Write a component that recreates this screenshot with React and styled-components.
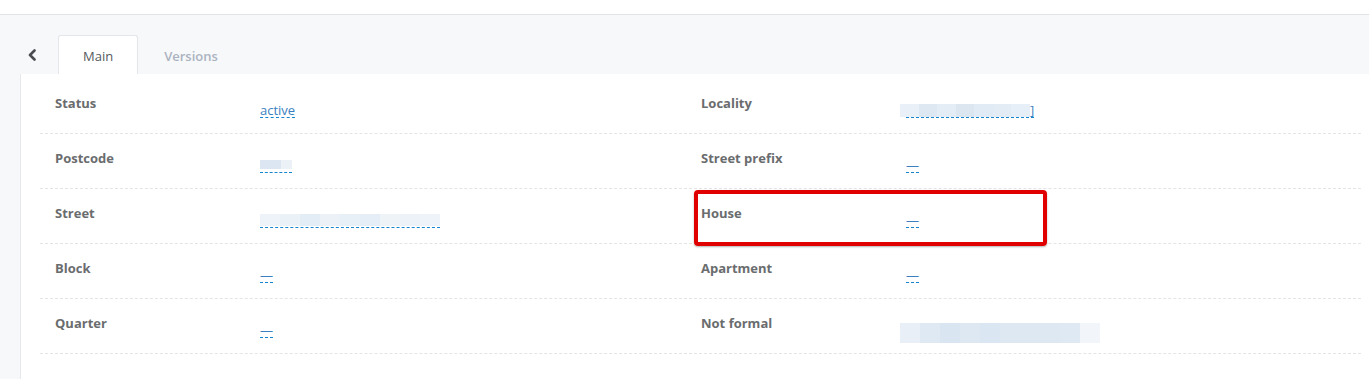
import styled, { createGlobalStyle } from "styled-components";

const GlobalStyle = createGlobalStyle`
    html, body {
        margin: 0;
        padding: 0;
        background: #f7f8fa;
        font-family: "Open Sans", "Liberation Sans", sans-serif;
    }
`;

const Page = styled.div`
    width: 1369px;
    min-height: 379px;
    background: #f7f8fa;
`;

const TopBar = styled.div`
    height: 14px;
    background: #ffffff;
    border-bottom: 1px solid #e2e3e5;
`;

const TabsRow = styled.div`
    display: flex;
    align-items: flex-end;
    padding: 20px 0 0 20px;
    height: 39px;
`;

const BackButton = styled.button`
    width: 23px;
    height: 39px;
    margin-right: 15px;
    padding: 0;
    border: 0;
    background: transparent;
    display: flex;
    align-items: center;
    justify-content: center;
    cursor: pointer;
    svg { margin-top: 1px; }
`;

const Tab = styled.div`
    height: 39px;
    box-sizing: border-box;
    padding: 0 24px;
    margin-right: 1px;
    display: flex;
    align-items: center;
    font-size: 13px;
    font-weight: ${(props) => (props.$active ? 400 : 600)};
    color: ${(props) => (props.$active ? "#555a5e" : "#abb3c0")};
    background: ${(props) => (props.$active ? "#ffffff" : "transparent")};
    border: 1px solid ${(props) => (props.$active ? "#e3e6ea" : "transparent")};
    border-bottom: 0;
    border-radius: 3px 3px 0 0;
    padding-top: 1px;
`;

const Panel = styled.div`
    margin-left: 20px;
    background: #ffffff;
    border-left: 1px solid #e6e8eb;
    padding: 5px 8px 26px 19px;
`;

const Row = styled.div`
    display: flex;
    height: 55px;
    box-sizing: border-box;
    padding: 15px 0 0 15px;
    border-bottom: 1px dashed #e4e4e4;
`;

const Cell = styled.div`
    position: relative;
    display: flex;
    width: 646px;
`;

const Label = styled.div`
    width: 205px;
    font-size: 13px;
    font-weight: 700;
    line-height: 18px;
    color: #6a6c6e;
`;

const ValueBox = styled.div`
    padding-top: 4px;
`;

const Value = styled.span`
    display: inline-block;
    font-size: 13px;
    line-height: 14px;
    color: #3a7fc0;
    border-bottom: ${(props) => (props.$plain ? "0" : "1px dashed #1585d0")};
`;

const Blur = styled.span`
    display: inline-block;
    vertical-align: ${(props) => props.$align || "baseline"};
    width: ${(props) => props.$w}px;
    height: ${(props) => props.$h}px;
    margin-left: ${(props) => props.$shift || 0}px;
    background: ${(props) => {
        const step = 100 / props.$colors.length;
        const stops = props.$colors
            .map((c, i) => `${c} ${i * step}%, ${c} ${(i + 1) * step}%`)
            .join(", ");
        return `linear-gradient(to right, ${stops})`;
    }};
`;

const Highlight = styled.div`
    position: absolute;
    left: -7px;
    top: -14px;
    width: 353px;
    height: 56px;
    box-sizing: border-box;
    border: 4px solid #e00000;
    border-radius: 4px;
    box-shadow: 0 1px 2px rgba(0, 0, 0, 0.3);
    pointer-events: none;
`;

const Dash = () => <Value>—</Value>;

const rows = [
    [
        { label: "Status", value: <Value>active</Value> },
        {
            label: "Locality",
            value: (
                <Value>
                    <Blur $w={130} $h={13} $shift={-6} $align="-2px"
                        $colors={["#e9f0f7", "#dde8f2", "#e4edf6", "#dbe6f1", "#e1ebf5", "#e3ecf5", "#e6eef7"]} />]
                </Value>
            ),
        },
    ],
    [
        {
            label: "Postcode",
            value: (
                <Value>
                    <Blur $w={32} $h={9} $align="1px" $colors={["#dce6f2", "#dce6f2", "#ebf1f7"]} />
                </Value>
            ),
        },
        { label: "Street prefix", value: <Dash /> },
    ],
    [
        {
            label: "Street",
            value: (
                <Value>
                    <Blur $w={180} $h={12} $align="-1px"
                        $colors={["#edf3f8", "#eaf1f7", "#e3edf5", "#ebf1f7", "#e8f0f7", "#e5eef6", "#eef3f8", "#ecf2f8", "#edf3f8"]} />
                </Value>
            ),
        },
        { label: "House", value: <Dash />, marked: true },
    ],
    [
        { label: "Block", value: <Dash /> },
        { label: "Apartment", value: <Dash /> },
    ],
    [
        { label: "Quarter", value: <Dash /> },
        {
            label: "Not formal",
            value: (
                <Value $plain>
                    <Blur $w={200} $h={20} $shift={-6} $align="-8px"
                        $colors={["#e8eff7", "#dfe9f3", "#d9e5f1", "#dde8f2", "#dae6f1", "#dde8f2", "#dde8f2", "#dde8f2", "#dfe9f3", "#f2f6fa"]} />
                </Value>
            ),
        },
    ],
];

const App = () => {
    return (
        <Page>
            <GlobalStyle />
            <TopBar />
            <TabsRow>
                <BackButton aria-label="back">
                    <svg width="10" height="12" viewBox="0 0 10 12">
                        <polyline points="7.5,1.5 3,6 7.5,10.5" fill="none" stroke="#4a4d50" strokeWidth="2.6" strokeLinecap="round" strokeLinejoin="round" />
                    </svg>
                </BackButton>
                <Tab $active>Main</Tab>
                <Tab>Versions</Tab>
            </TabsRow>
            <Panel>
                {rows.map((r, i) => (
                    <Row key={i}>
                        {r.map((c) => (
                            <Cell key={c.label}>
                                {c.marked && <Highlight />}
                                <Label>{c.label}</Label>
                                <ValueBox>{c.value}</ValueBox>
                            </Cell>
                        ))}
                    </Row>
                ))}
            </Panel>
        </Page>
    );
};

export default App;
